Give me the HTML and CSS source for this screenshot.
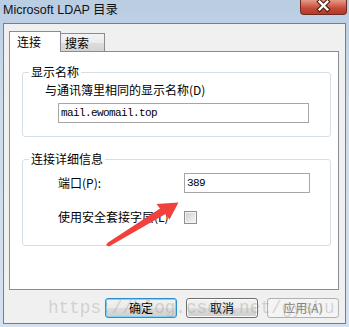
FILE: index.html
```html
<!DOCTYPE html>
<html lang="zh-CN">
<head>
    <meta charset="UTF-8">
    <title>Microsoft LDAP 目录</title>
    <link rel="stylesheet" href="styles.css">
</head>
<body>
    <div class="window">
        <div class="titlebar">
            <span class="title">Microsoft LDAP 目录</span>
            <div class="close">
                <svg width="47" height="15" viewBox="0 0 47 15">
                    <path d="M20 1.5 L28 9.5 M28 1.5 L20 9.5" stroke="#4a2119" stroke-width="4.6" stroke-linecap="square"/>
                    <path d="M20 1.5 L28 9.5 M28 1.5 L20 9.5" stroke="#fff" stroke-width="2.4" stroke-linecap="square"/>
                </svg>
            </div>
        </div>
        <div class="client">
            <div class="tabs">
                <div class="tab active">连接</div>
                <div class="tab">搜索</div>
            </div>
            <div class="panel">
                <fieldset class="group g1">
                    <legend>显示名称</legend>
                    <div class="field">
                        <div class="label">与通讯簿里相同的显示名称(D)</div>
                        <div class="input wide">mail.ewomail.top</div>
                    </div>
                </fieldset>
                <fieldset class="group g2">
                    <legend>连接详细信息</legend>
                    <div class="row">
                        <span class="label name">端口(P):</span>
                        <div class="input port">389</div>
                    </div>
                    <div class="row second">
                        <span class="label name">使用安全套接字层(L)</span>
                        <span class="check"></span>
                    </div>
                </fieldset>
            </div>
            <div class="buttons">
                <div class="btn default">确定</div>
                <div class="btn">取消</div>
                <div class="btn disabled">应用(A)</div>
            </div>
        </div>
        <div class="watermark">https://blog.csdn.net/gyshu</div>
        <svg class="arrow" width="349" height="327" viewBox="0 0 349 327">
            <polygon points="106,245 108,242.5 160,208.5 156.5,204 178.5,202.5 169.5,219.5 165.5,214 109,246.5" fill="#f2403c"/>
        </svg>
    </div>
</body>
</html>
```

FILE: styles.css
```css
body {
    margin: 0;
    padding: 0;
    font-family: "Noto Sans CJK SC", sans-serif;
    font-size: 12px;
    color: #000;
}
.window {
    position: relative;
    width: 349px;
    height: 327px;
    overflow: hidden;
    display: flex;
    flex-direction: column;
    background: linear-gradient(180deg, #b9cde3 0%, #cbdbeb 30%, #d3e1f0 100%);
}
.titlebar {
    height: 23px;
    display: flex;
    align-items: flex-start;
}
.title {
    padding-left: 3px;
    line-height: 20px;
    font-family: "Liberation Sans", "Noto Sans CJK SC", sans-serif;
    font-size: 12.5px;
    color: #111;
}
.close {
    margin-left: auto;
    margin-right: 2px;
    width: 47px;
    height: 15px;
    box-sizing: border-box;
    border: 1px solid #6c2a22;
    border-top: none;
    border-radius: 0 0 4px 4px;
    background: linear-gradient(180deg, #e49a88 0%, #d46a55 35%, #c24a37 60%, #b33a28 100%);
    display: flex;
}
.close svg {
    margin-left: -1px;
}

.client {
    flex: 1;
    margin: 0 3px 3px 3px;
    border: 1px solid #6f8095;
    background: #f0f0f0;
    padding: 7px 6px 0 5px;
    display: flex;
    flex-direction: column;
}

.tabs {
    display: flex;
    align-items: flex-end;
    height: 21px;
}
.tab {
    box-sizing: border-box;
    border: 1px solid #898c95;
    border-bottom: none;
}
.tab.active {
    position: relative;
    z-index: 2;
    width: 52px;
    height: 21px;
    padding-left: 7px;
    line-height: 19px;
    background: #fff;
}
.tab:not(.active) {
    width: 45px;
    height: 19px;
    margin-left: -1px;
    padding-left: 4px;
    line-height: 18px;
    background: linear-gradient(180deg, #f3f3f3 0%, #ebebeb 50%, #dddddd 50%, #d2d2d2 100%);
}

.panel {
    position: relative;
    z-index: 1;
    margin-top: -1px;
    box-sizing: border-box;
    width: 330px;
    height: 239px;
    border: 1px solid #898c95;
    background: #fff;
    padding: 0 7px 0 12px;
}

.group {
    margin: 0;
    box-sizing: border-box;
    border: 1px solid #d5dfe5;
    border-radius: 3px;
    padding: 0 0 0 6px;
    min-width: 0;
}
.group legend {
    padding: 0 2px;
    line-height: 14px;
}
.g1 {
    margin-top: 13px;
    height: 72px;
    padding-top: 4px;
}
.g2 {
    margin-top: 15px;
    height: 94px;
    padding-top: 7px;
}
.label {
    line-height: 14px;
    white-space: nowrap;
}
.field {
    padding-left: 16px;
}
.input {
    box-sizing: border-box;
    height: 20px;
    border: 1px solid #a6a6a6;
    background: #fff;
    padding-left: 2px;
    font-family: "Liberation Mono", monospace;
    font-size: 11px;
    letter-spacing: -0.6px;
    line-height: 18px;
}
.input.wide {
    margin-top: 6px;
    margin-left: 13px;
    width: 251px;
}
.row {
    display: flex;
    align-items: center;
    height: 20px;
    padding-left: 29px;
}
.row.second {
    margin-top: 14px;
}
.name {
    width: 126px;
}
.input.port {
    width: 126px;
}
.check {
    box-sizing: border-box;
    width: 13px;
    height: 13px;
    border: 1px solid #8e8f8f;
    background: linear-gradient(135deg, #cfcfcf, #f7f7f7);
    box-shadow: inset 0 0 0 1px #f4f4f4;
}

.buttons {
    margin-top: 8px;
    display: flex;
    justify-content: flex-end;
    gap: 9px;
}
.btn {
    box-sizing: border-box;
    width: 72px;
    height: 20px;
    border: 1px solid #707070;
    border-radius: 3px;
    background: linear-gradient(180deg, #f2f2f2 0%, #ebebeb 50%, #dddddd 50%, #cfcfcf 100%);
    box-shadow: inset 0 0 0 1px #fbfbfb;
    text-align: center;
    line-height: 18px;
}
.btn.default {
    border-color: #2a8fcf;
    box-shadow: inset 0 0 0 1px #7fd1f6;
}
.btn.disabled {
    border-color: #adb2b5;
    background: #f4f4f4;
    box-shadow: none;
    color: #838383;
}

.watermark {
    position: absolute;
    z-index: 5;
    left: 48px;
    top: 299px;
    font-family: "Liberation Mono", monospace;
    font-size: 17.7px;
    line-height: 18px;
    color: rgba(150, 150, 135, 0.35);
    white-space: nowrap;
    pointer-events: none;
}
.arrow {
    position: absolute;
    z-index: 6;
    top: 0;
    left: 0;
    pointer-events: none;
}
```
